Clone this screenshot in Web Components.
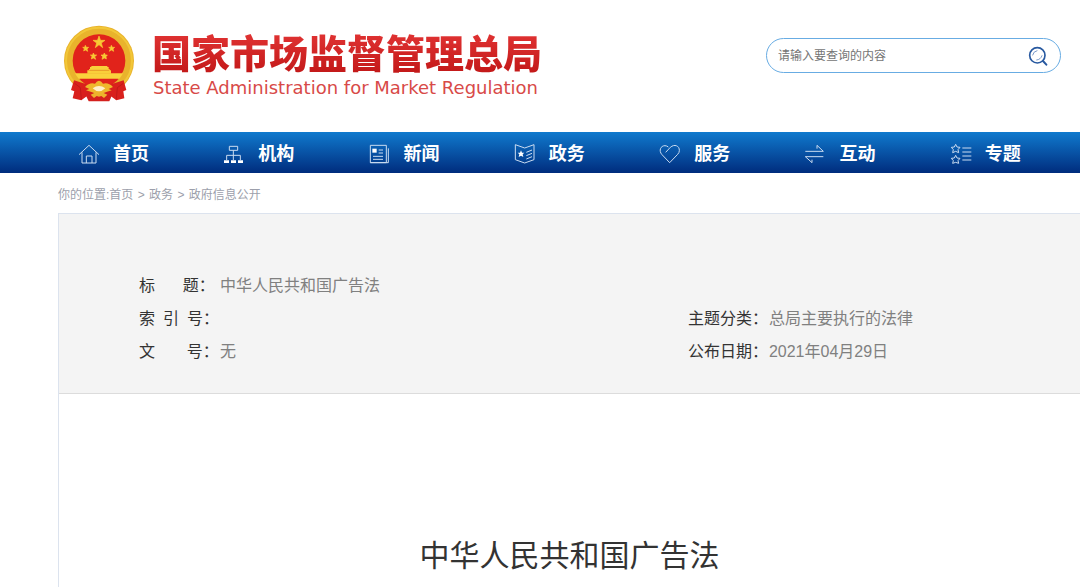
<!DOCTYPE html>
<html lang="zh-CN">
<head>
<meta charset="utf-8">
<meta name="viewport" content="width=device-width, initial-scale=1">
<title>国家市场监督管理总局</title>
<style>
  body { margin: 0; background: #fff; color: #333; font-family: "Liberation Sans", "Noto Sans CJK SC", sans-serif; }
</style>
</head>
<body>
<site-header>
  <site-search slot="search"></site-search>
</site-header>
<site-nav>
  <nav-item icon="home">首页</nav-item>
  <nav-item icon="org">机构</nav-item>
  <nav-item icon="news">新闻</nav-item>
  <nav-item icon="affairs">政务</nav-item>
  <nav-item icon="heart">服务</nav-item>
  <nav-item icon="exchange">互动</nav-item>
  <nav-item icon="topics">专题</nav-item>
</site-nav>
<bread-crumb></bread-crumb>
<article-panel>
  <meta-item slot="meta" wide><span slot="label">标&nbsp;&nbsp;&nbsp;&nbsp;&nbsp;&nbsp;&nbsp;题：</span>中华人民共和国广告法</meta-item>
  <meta-item slot="meta"><span slot="label">索&nbsp;&nbsp;引&nbsp;&nbsp;号：</span></meta-item>
  <meta-item slot="meta"><span slot="label">主题分类：</span>总局主要执行的法律</meta-item>
  <meta-item slot="meta"><span slot="label">文&nbsp;&nbsp;&nbsp;&nbsp;&nbsp;&nbsp;&nbsp;&nbsp;号：</span>无</meta-item>
  <meta-item slot="meta"><span slot="label">公布日期：</span>2021年04月29日</meta-item>
  <span slot="title">中华人民共和国广告法</span>
</article-panel>

<script>
const define = (name, html, setup) => {
  const template = document.createElement('template');
  template.innerHTML = html;
  customElements.define(name, class extends HTMLElement {
    constructor() {
      super();
      this.attachShadow({ mode: 'open' }).append(template.content.cloneNode(true));
    }
    connectedCallback() { if (setup) setup(this); }
  });
};

define('national-emblem', `
  <style>
    :host { display: block; width: 74px; height: 78px; }
    svg { display: block; width: 100%; height: 100%; }
  </style>
  <svg viewBox="36 24 222 234" role="img" aria-label="国徽">
    <circle cx="147" cy="134" r="105" fill="#e9b32c"/>
    <circle cx="147" cy="134" r="99" fill="none" stroke="#f2c738" stroke-width="6"/>
    <circle cx="147" cy="134" r="79" fill="#e1231b"/>
    <path d="M75 172H219A80 80 0 0 1 208 188H86A80 80 0 0 1 75 172Z" fill="#f9d23c"/>
    <path d="M88 190H206L186 206H108Z" fill="#e1231b"/>
    <path d="M112 173V163H117V159H120V153H124V150H172V153H176V159H179V163H183V173Z" fill="#f9cf3a"/>
    <path d="M118 163H177" stroke="#df7b20" stroke-width="2"/>
    <g fill="#f8c934" stroke="#f8c934" stroke-width="2">
      <path d="M147 60L151.500 73H165L154 81L158 95L147 86L136 95L140 81L129 73H142.500Z"/>
      <path d="M106 88L109 94L116 94L111 99L113 106L106 102L101 105L103 98L98 94H104Z"/>
      <path d="M184 88L187 94L194 94L189 99L191 106L184 102L178 106L181 98L176 94H182Z"/>
      <path d="M130 111L133 117L140 117L134 122L137 130L130 126L124 129L126 121L121 117H128Z"/>
      <path d="M163 111L166 117L172 117L168 122L169 129L163 126L156 130L158 122L153 117H160Z"/>
    </g>
    <path d="M72 193L98 201L130 210L123 232L103 246L94 253L68 247L73 226L63 222Z" fill="#d9201c"/>
    <path d="M221 193L195 201L163 210L170 232L190 246L199 253L223 247L220 226L229 222Z" fill="#d9201c"/>
    <path d="M74 202L91 215L94 250M220 202L202 215L199 250" fill="none" stroke="#c01a19" stroke-width="3"/>
    <path d="M106 235L124 226H170L187 235L178 256H116Z" fill="#d4201d"/>
    <path d="M105 213Q119 198 135 203Q147 185 159 203Q175 198 189 213L176 219L185 223L171 227Q147 238 122 227L108 223L118 219Z" fill="#efb72c"/>
    <path d="M128 217Q147 203 166 217Q156 226 147 226Q137 226 128 217Z" fill="#fff0ca"/>
    <path d="M122 236Q147 220 172 236L162 246L154 240L147 242L140 240L132 246Z" fill="#edb42c"/>
  </svg>`);

define('site-header', `
  <style>
    :host { display: flex; justify-content: space-between; align-items: flex-start; height: 132px; padding: 0 19px 0 62px; box-sizing: border-box; }
    .brand { display: flex; align-items: flex-start; gap: 16px; padding-top: 24px; color: inherit; text-decoration: none; }
    .name { display: flex; flex-direction: column; padding-top: 2px; white-space: nowrap; }
    .cn { font: 900 39px/50px "Noto Sans CJK SC", sans-serif; color: transparent; background: linear-gradient(#e53737, #c11717) text; -webkit-background-clip: text; }
    .en { padding-left: 1px; font: 18px/24px "DejaVu Sans", sans-serif; color: #d84a48; }
    ::slotted(*) { margin-top: 38px; }
  </style>
  <a class="brand" href="#">
    <national-emblem></national-emblem>
    <span class="name"><span class="cn">国家市场监督管理总局</span><span class="en">State Administration for Market Regulation</span></span>
  </a>
  <slot name="search"></slot>`);

define('site-search', `
  <style>
    :host { display: block; width: 295px; }
    form { display: flex; align-items: center; height: 35px; box-sizing: border-box; padding: 0 12px 0 11px; border: 1px solid #68ace3; border-radius: 18px; margin: 0; }
    input { flex: 1; min-width: 0; border: 0; padding: 0; outline: 0; background: none; color: #333; font: 12px/20px "Liberation Sans", "Noto Sans CJK SC", sans-serif; }
    input::placeholder { color: #757575; opacity: 1; }
    button { border: 0; padding: 0; background: none; width: 20px; height: 20px; }
    svg { display: block; }
  </style>
  <form role="search">
    <input type="text" aria-label="搜索" placeholder="请输入要查询的内容">
    <button type="button" aria-label="查询">
      <svg width="20" height="20" viewBox="0 0 60 60" fill="none" stroke="#2859a0" stroke-linecap="round">
        <circle cx="28" cy="28" r="23" stroke-width="5"/>
        <path d="M45 45L55 56" stroke-width="6"/>
        <path d="M14 27Q16 16 27 14M26 42Q38 41 42 29" stroke="#7c9bca" stroke-width="3"/>
      </svg>
    </button>
  </form>`);

define('site-nav', `
  <style>
    :host { display: block; background: linear-gradient(#107ace, #002c7d); }
    nav { display: grid; grid-template-columns: repeat(7, 1fr); padding: 0 5px 0 58px; height: 41px; }
  </style>
  <nav aria-label="主导航"><slot></slot></nav>`);

const icons = {
  home: '<path d="M3 35L33 7L63 35M12 28V60H54V28M25 60V39H42V60"/>',
  org: '<path d="M19 10H44V22H19ZM31 22V51M11 51V37H52V51"/><path d="M3 52H18V60H3ZM24 52H39V60H24ZM45 52H60V60H45Z" fill="#fff" stroke="none"/>',
  news: '<path d="M4 7H52V59H4ZM58 16V59H4M29 21H42M29 30H42M12 40H42M12 49H42"/><path d="M10 17H23V29H10Z" fill="#fff" stroke="none"/>',
  affairs: '<path d="M4 5L32 15L60 5V50L32 60L4 50ZM37 28L54 21M37 38L54 31M37 48L54 41"/><path d="M21 22L24 29L31 29L26 34L28 42L21 38L14 42L16 34L11 29L18 29Z" fill="#fff" stroke="none"/>',
  heart: '<path d="M20 28L34 13C46 2 62 8 61 23Q61 29 56 34L32 59L9 35C-2 23 5 8 18 8Q23 8 28 12"/>',
  exchange: '<path d="M4 25H58L39 7V17M58 41H4L24 59V50"/>',
  topics: '<path d="M17 4L21 12L30 13L24 20L26 29L17 25L8 29L10 20L4 13L13 12ZM17 37L21 45L30 46L24 53L26 61L17 58L8 61L10 53L4 46L13 45Z"/><path d="M37 15H64M37 27H64M37 39H64M37 51H64"/>'
};
define('nav-item', `
  <style>
    :host { display: block; }
    a { display: flex; align-items: center; gap: 13px; height: 100%; box-sizing: border-box; padding: 2px 0 0 20px; color: #fff; text-decoration: none; font-weight: 700; font-size: 18px; line-height: 24px; white-space: nowrap; }
    svg { width: 22px; height: 22px; fill: none; stroke: #cbdcf1; stroke-width: 3; }
  </style>
  <a href="#"><svg viewBox="0 0 66 66" aria-hidden="true"></svg><slot></slot></a>`,
  el => { el.shadowRoot.querySelector('svg').innerHTML = icons[el.getAttribute('icon')]; });

define('bread-crumb', `
  <style>
    :host { display: block; padding: 12px 0 8px 58px; font-size: 12px; line-height: 20px; color: #9c9fab; }
    a { color: inherit; text-decoration: none; }
    span { padding: 0 1px; }
  </style>
  <nav aria-label="面包屑">你的位置:<a href="#">首页</a> <span>&gt;</span> <a href="#">政务</a> <span>&gt;</span> <a href="#">政府信息公开</a></nav>`);

define('article-panel', `
  <style>
    :host { display: block; margin-left: 58px; border: solid #dce3ee; border-width: 1px 0 0 1px; }
    .meta { display: grid; grid-template-columns: 7fr 5fr; grid-auto-rows: 33px; padding: 55px 0 25px 80px; background: #f4f4f4; border-bottom: 1px solid #dcdcdc; }
    h1 { margin: 0; padding: 142px 0 11px; text-align: center; font-size: 30px; line-height: 40px; font-weight: 400; color: #333; }
  </style>
  <div class="meta"><slot name="meta"></slot></div>
  <h1><slot name="title"></slot></h1>`);

define('meta-item', `
  <style>
    :host { display: flex; align-items: center; font-size: 16px; line-height: 24px; color: #808080; white-space: nowrap; }
    :host([wide]) { grid-column: 1 / -1; }
    .label { min-width: 81px; color: #333; font-family: Roboto, "Noto Sans CJK SC", sans-serif; }
  </style>
  <span class="label"><slot name="label"></slot></span><span><slot></slot></span>`);
</script>
</body>
</html>
